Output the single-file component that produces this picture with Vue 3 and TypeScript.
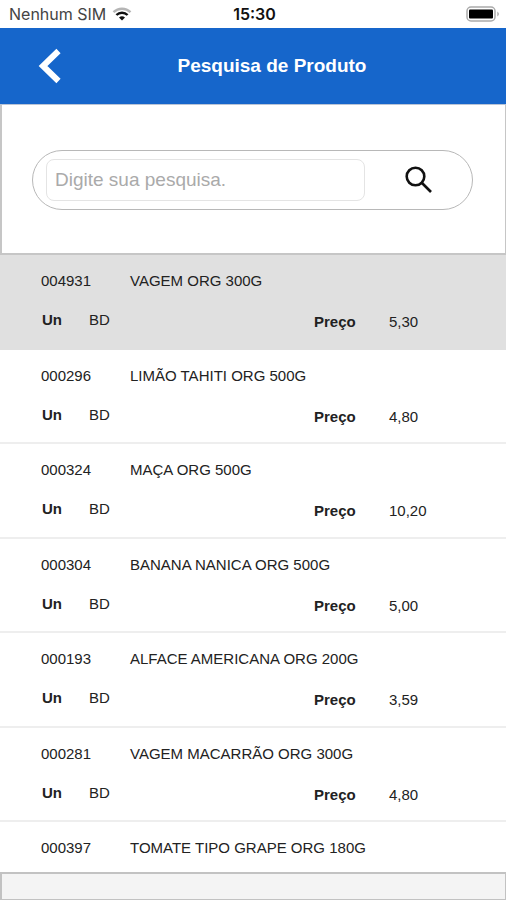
<script setup lang="ts">
import { ref } from 'vue'

interface Product {
  code: string
  name: string
  unit?: string
  price?: string
}

const query = ref('')
const selected = ref('004931')

const products: Product[] = [
  { code: '004931', name: 'VAGEM ORG 300G', unit: 'BD', price: '5,30' },
  { code: '000296', name: 'LIMÃO TAHITI ORG 500G', unit: 'BD', price: '4,80' },
  { code: '000324', name: 'MAÇA ORG 500G', unit: 'BD', price: '10,20' },
  { code: '000304', name: 'BANANA NANICA ORG 500G', unit: 'BD', price: '5,00' },
  { code: '000193', name: 'ALFACE AMERICANA ORG 200G', unit: 'BD', price: '3,59' },
  { code: '000281', name: 'VAGEM MACARRÃO ORG 300G', unit: 'BD', price: '4,80' },
  { code: '000397', name: 'TOMATE TIPO GRAPE ORG 180G' },
]
</script>

<template>
  <div class="screen">
    <div class="status">
      <div class="carrier">
        <span>Nenhum SIM</span>
        <svg class="wifi" viewBox="0 0 20 14" aria-hidden="true">
          <path d="M1.5 5.2A12.2 12.2 0 0 1 18.5 5.2" stroke="#b5b5b5" />
          <path d="M4.4 8A8 8 0 0 1 15.6 8" stroke="#111" />
          <path d="M10 13.6L7 10.6A4.3 4.3 0 0 1 13 10.6Z" fill="#111" stroke="none" />
        </svg>
      </div>
      <time class="clock">15:30</time>
      <svg class="battery" viewBox="0 0 34 16" aria-hidden="true">
        <rect x="1" y="1" width="28" height="14" rx="4" fill="#fff" stroke="#aaa" stroke-width="1.5" />
        <rect x="3" y="3.5" width="24" height="9" rx="1" fill="#000" />
        <path d="M31.3 5.5Q34.6 8 31.3 10.5Z" fill="#aaa" />
      </svg>
    </div>

    <header class="bar">
      <button class="back" type="button" aria-label="Voltar">
        <svg viewBox="0 0 24 36" aria-hidden="true">
          <path d="M20.5 3L5 18L20.5 33" />
        </svg>
      </button>
      <h1>Pesquisa de Produto</h1>
    </header>

    <form class="search" @submit.prevent>
      <div class="pill">
        <input v-model="query" type="text" placeholder="Digite sua pesquisa." aria-label="Digite sua pesquisa." />
        <button class="find" type="submit" aria-label="Pesquisar">
          <svg viewBox="0 0 28 28" aria-hidden="true">
            <circle cx="10.5" cy="10.5" r="8.8" />
            <path d="M17 17L26 26" />
          </svg>
        </button>
      </div>
    </form>

    <ul class="list">
      <li
        v-for="product in products"
        :key="product.code"
        class="row"
        :class="{ active: product.code === selected }"
        @click="selected = product.code"
      >
        <div class="heading">
          <span class="code">{{ product.code }}</span>
          <span>{{ product.name }}</span>
        </div>
        <div v-if="product.price" class="details">
          <b>Un</b>
          <span>{{ product.unit }}</span>
          <b class="lower">Preço</b>
          <span class="lower">{{ product.price }}</span>
        </div>
      </li>
    </ul>

    <footer class="footer"></footer>
  </div>
</template>

<style>
body {
  margin: 0;
  background: #fff;
}
</style>

<style scoped>
.screen {
  box-sizing: border-box;
  min-height: 100vh;
  display: flex;
  flex-direction: column;
  background: #fff;
  color: #222;
  font-family: "Liberation Sans", Arial, sans-serif;
  font-size: 15px;
  line-height: 20px;
}

.status {
  flex: none;
  height: 28px;
  display: grid;
  grid-template-columns: 1fr auto 1fr;
  align-items: center;
  padding: 0 6px 0 9px;
  font-family: Inter, "Liberation Sans", sans-serif;
  font-size: 16px;
}

.carrier {
  display: flex;
  align-items: center;
  gap: 6px;
  color: #444;
}

.wifi {
  width: 20px;
  height: 14px;
  fill: none;
  stroke-width: 2.4;
}

.clock {
  color: #111;
  font-weight: 600;
}

.battery {
  justify-self: end;
  width: 34px;
  height: 16px;
}

.bar {
  flex: none;
  box-sizing: border-box;
  height: 77px;
  display: grid;
  grid-template-columns: 1fr auto 1fr;
  align-items: center;
  padding: 0 0 0 38px;
  border-bottom: 1px solid #b9c4d6;
  background: #1666cb;
}

.bar h1 {
  margin: 0;
  grid-column: 2;
  color: #fff;
  font-size: 19px;
  line-height: 24px;
}

.back,
.find {
  display: flex;
  padding: 0;
  border: 0;
  background: none;
  cursor: pointer;
}

.back {
  justify-self: start;
}

.back svg {
  width: 24px;
  height: 36px;
  fill: none;
  stroke: #fff;
  stroke-width: 6;
}

.search {
  flex: none;
  box-sizing: border-box;
  height: 150px;
  padding: 45px 32px 0 30px;
  border: solid #c6c6c6;
  border-width: 0 1px 2px 2px;
}

.pill {
  box-sizing: border-box;
  height: 60px;
  display: flex;
  align-items: center;
  padding: 0 39px 0 13px;
  border: 1px solid #b8b8b8;
  border-radius: 30px;
}

.pill input {
  flex: 1;
  min-width: 0;
  box-sizing: border-box;
  height: 42px;
  padding: 0 8px;
  border: 1px solid #e4e4e4;
  border-radius: 8px;
  outline: none;
  background: #fff;
  color: #222;
  font: inherit;
  font-size: 19px;
}

.pill input::placeholder {
  color: #aaa;
  opacity: 1;
}

.find {
  margin-left: 40px;
}

.find svg {
  width: 28px;
  height: 28px;
  fill: none;
  stroke: #111;
  stroke-width: 2.6;
}

.list {
  flex: 1;
  display: grid;
  grid-template-rows: repeat(6, 1fr) 50px;
  margin: 0;
  padding: 0;
  list-style: none;
}

.row {
  box-sizing: border-box;
  display: flex;
  flex-direction: column;
  gap: 19px;
  padding: 16px 24px 0 41px;
  border-bottom: 2px solid #eee;
}

.row:last-child {
  border-bottom: 0;
}

.active {
  border-color: #e0e0e0;
  background: #e0e0e0;
}

.heading {
  display: flex;
}

.code {
  width: 89px;
}

.details {
  display: grid;
  grid-template-columns: 47px 1fr 75px 93px;
  align-items: start;
  padding-left: 1px;
}

.lower {
  padding-top: 2px;
}

.footer {
  flex: none;
  box-sizing: border-box;
  height: 28px;
  border: solid #c2c2c2;
  border-width: 2px 1px 1px 2px;
  background: #f4f4f4;
}
</style>
